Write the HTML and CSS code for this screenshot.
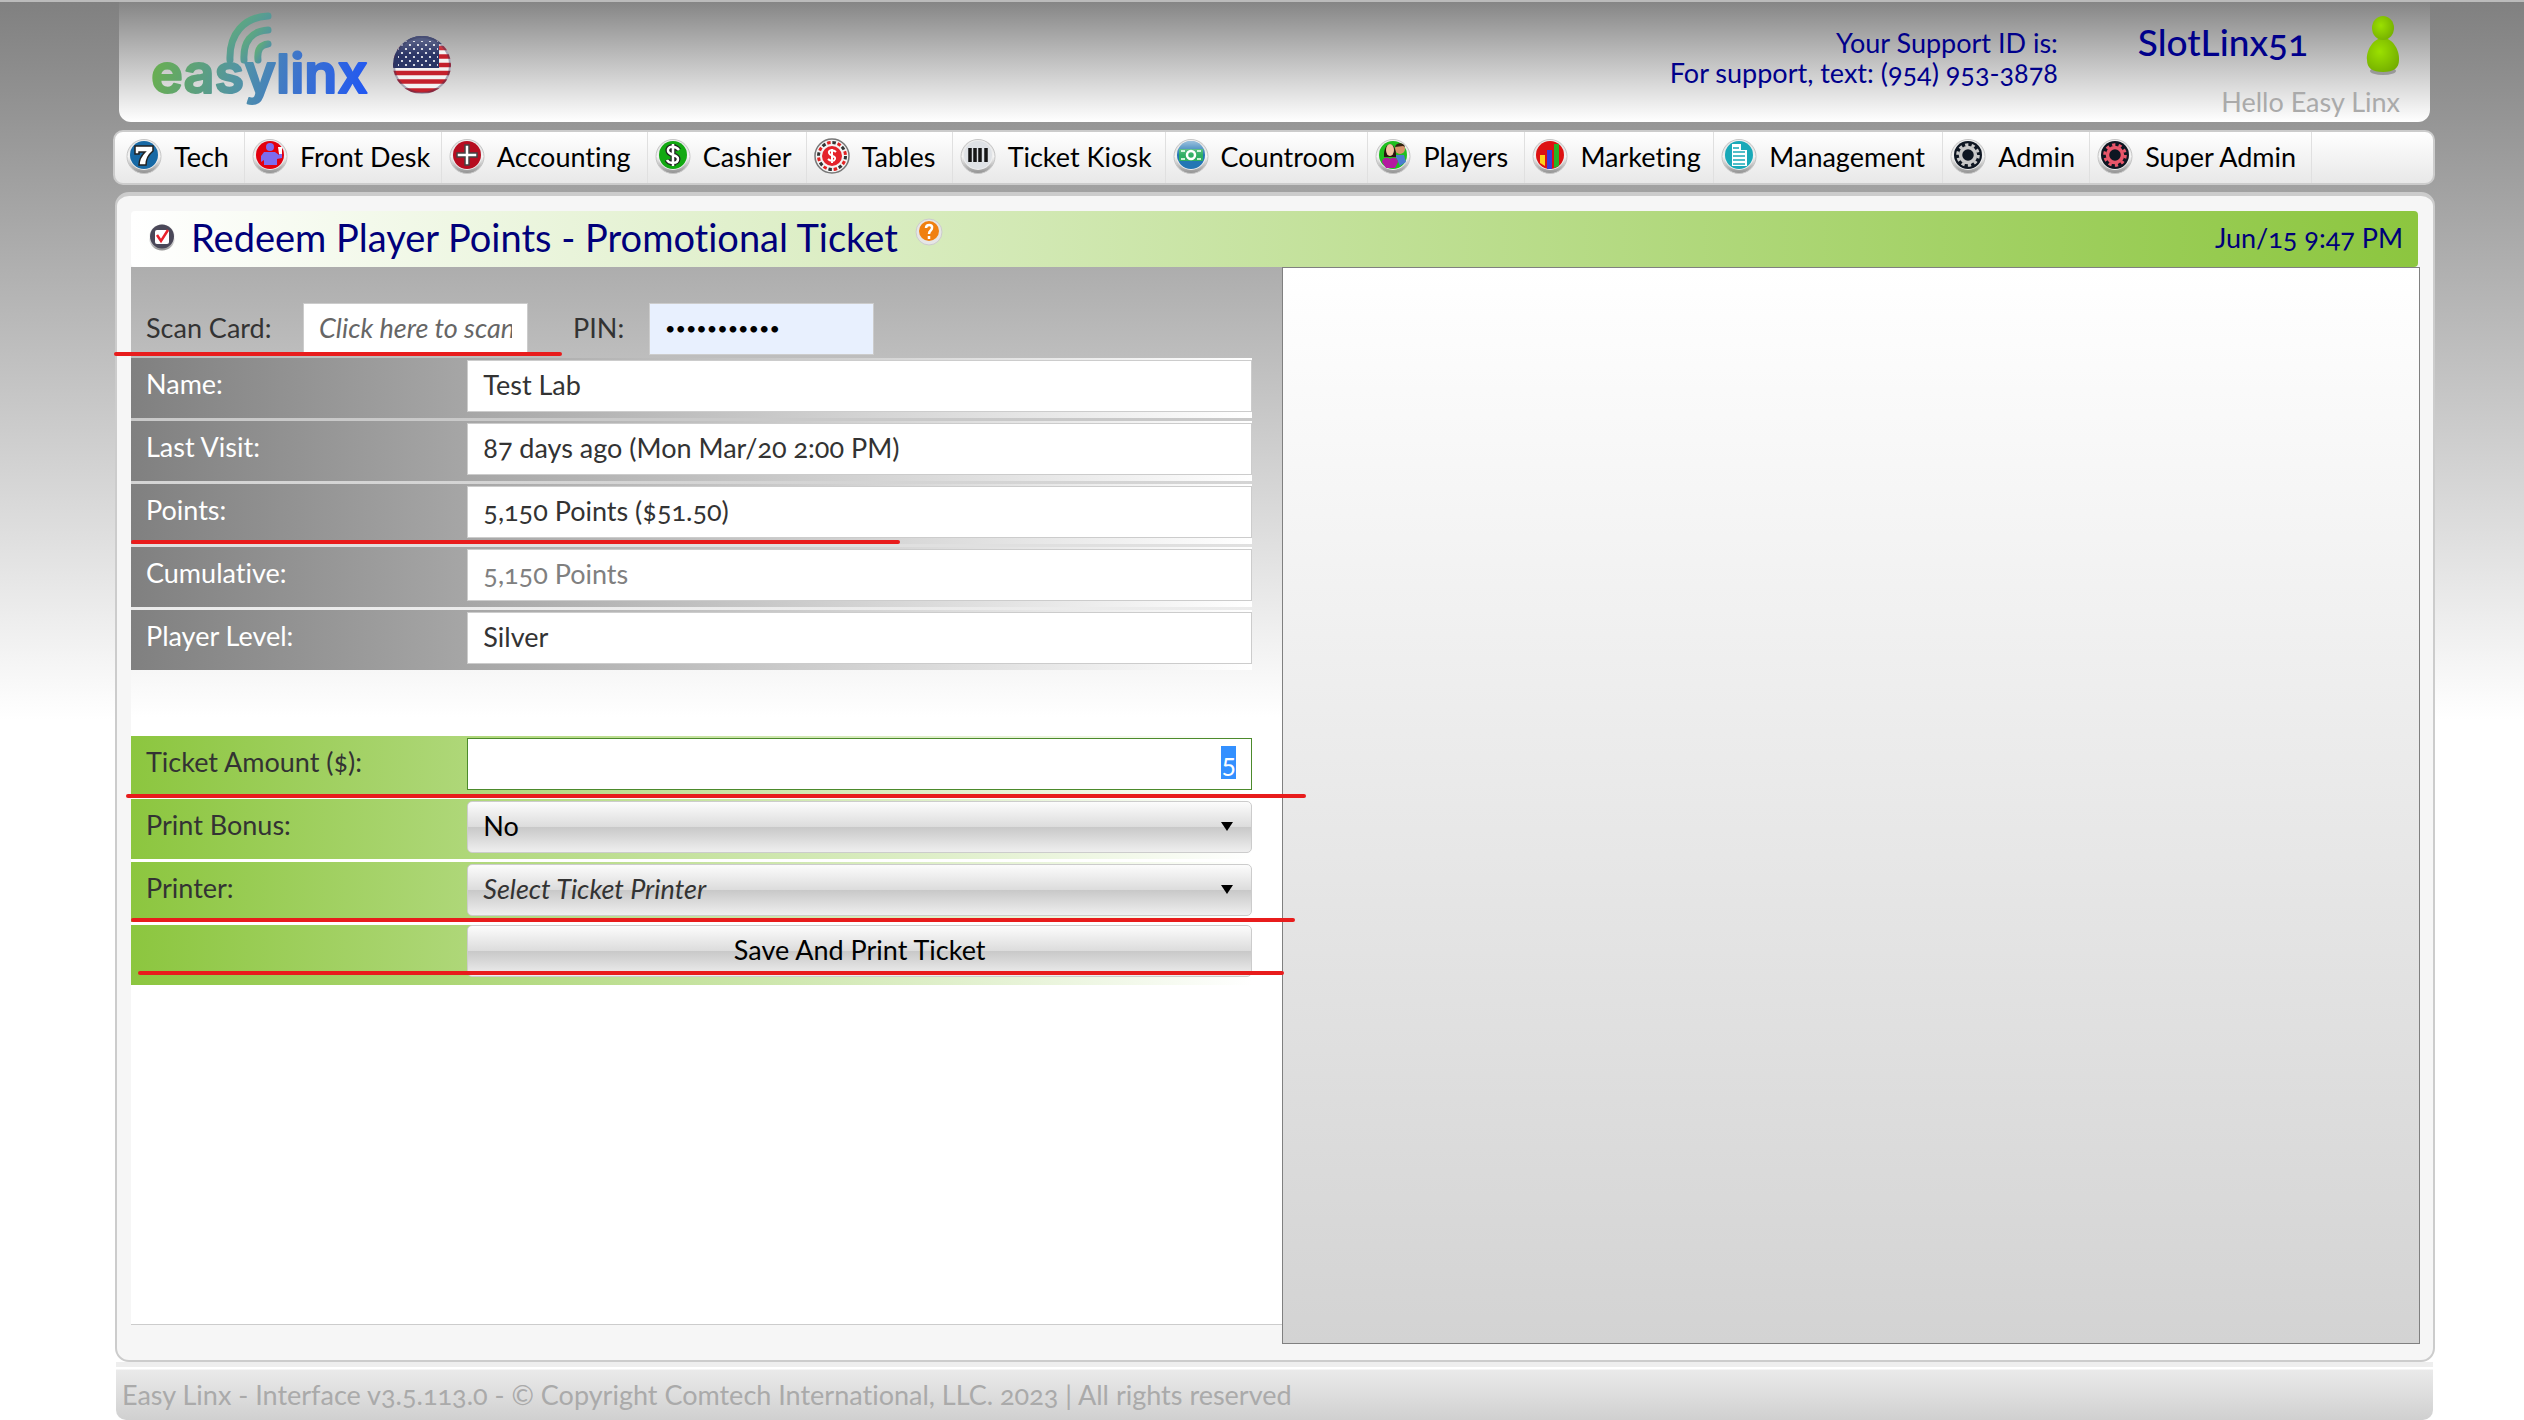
FILE: index.html
```html
<!DOCTYPE html>
<html lang="en">
<head>
    <meta charset="UTF-8">
    <meta name="viewport" content="width=device-width, initial-scale=1.0">
    <title>Redeem Player Points - Promotional Ticket</title>
    <link rel="stylesheet" href="styles.css">
</head>
<body>
    <svg class="defs" width="0" height="0" aria-hidden="true">
        <defs>
            <linearGradient id="rim" x1="0" y1="0" x2="0" y2="1">
                <stop offset="0" stop-color="#d4d4d4"/><stop offset="0.5" stop-color="#f6f6f6"/><stop offset="1" stop-color="#8f8f8f"/>
            </linearGradient>
            <linearGradient id="shine" x1="0" y1="0" x2="0" y2="1">
                <stop offset="0" stop-color="#fff" stop-opacity="0.55"/><stop offset="0.5" stop-color="#fff" stop-opacity="0"/>
            </linearGradient>
            <linearGradient id="brand" gradientUnits="userSpaceOnUse" x1="0" y1="40" x2="222" y2="85">
                <stop offset="0" stop-color="#6ab04c"/><stop offset="0.4" stop-color="#5294a4"/><stop offset="0.65" stop-color="#3d74cc"/><stop offset="1" stop-color="#1f55f5"/>
            </linearGradient>
            <linearGradient id="waves" x1="0" y1="0" x2="1" y2="1">
                <stop offset="0" stop-color="#62b074"/><stop offset="1" stop-color="#4a84b8"/>
            </linearGradient>
            <radialGradient id="lime" cx="0.4" cy="0.4" r="0.7">
                <stop offset="0" stop-color="#9be000"/><stop offset="1" stop-color="#72ac00"/>
            </radialGradient>
            <symbol id="ring" viewBox="0 0 36 36">
                <circle cx="18" cy="18.500" r="17" fill="url(#rim)" stroke="#c6c6c6" stroke-width="1"/>
                <circle cx="18" cy="17" r="15" fill="#eee"/>
            </symbol>
            <symbol id="gear" viewBox="0 0 36 36">
                <circle cx="18" cy="17" r="14" fill="#0e1622"/>
                <circle cx="18" cy="17" r="7.500" fill="none" stroke="currentColor" stroke-width="3.500"/>
                <circle cx="18" cy="17" r="10.300" fill="none" stroke="currentColor" stroke-width="3" stroke-dasharray="3.240 3.240"/>
            </symbol>
            <clipPath id="round"><circle cx="30" cy="30" r="29"/></clipPath>
            <pattern id="stars" width="8" height="8" patternUnits="userSpaceOnUse">
                <circle cx="2" cy="2" r="1.100" fill="#fff"/><circle cx="6" cy="6" r="1.100" fill="#fff"/>
            </pattern>
        </defs>
    </svg>

    <div class="page">
        <header class="header">
            <svg class="logo" width="224" height="102" viewBox="0 0 224 102" role="img" aria-label="easylinx">
                <g fill="none" stroke="url(#waves)" stroke-width="7" stroke-linecap="round">
                    <path d="M79 48C78 22 93 5 117 4"/>
                    <path d="M93 48C92 30 100 19 117 18"/>
                    <path d="M107 48C106 38 109 33 117 32"/>
                </g>
                <text class="logo-text" x="0" y="81" fill="url(#brand)" stroke="url(#brand)">easylinx</text>
            </svg>
            <svg class="flag" width="60" height="60" viewBox="0 0 60 60" role="img" aria-label="English">
                <g clip-path="url(#round)">
                    <rect width="60" height="60" fill="#f4f2f2"/>
                    <path d="M0 13H60M0 21.500H60M0 30H60M0 38H60M0 46.500H60M0 55.500H60" stroke="#c4202c" stroke-width="4.500"/>
                    <rect width="47" height="33" fill="#2b3566"/>
                    <rect x="6" y="6" width="40" height="25" fill="url(#stars)"/>
                    <path d="M0 0H60V9H47V5H0Z" fill="#1e2a5c"/>
                    <ellipse cx="30" cy="20" rx="27" ry="19" fill="url(#shine)" opacity="0.5"/>
                </g>
                <circle cx="30" cy="30" r="28" fill="none" stroke="#31345a" stroke-opacity="0.4" stroke-width="2"/>
            </svg>
            <div class="support">
                <div>Your Support ID is:</div>
                <div>For support, text: (954) 953-3878</div>
            </div>
            <div class="account">
                <div class="account-top">
                    <span class="account-id">SlotLinx51</span>
                    <svg class="person" width="34" height="60" viewBox="0 0 34 60" aria-hidden="true">
                        <ellipse cx="17" cy="55" rx="13" ry="4" fill="#666" opacity="0.5"/>
                        <path d="M17 22C27 22 34 35 33 44C33 52 28 56 17 56S1 52 1 44C0 35 7 22 17 22Z" fill="url(#lime)"/>
                        <ellipse cx="17" cy="12" rx="11" ry="12" fill="url(#lime)"/>
                    </svg>
                </div>
                <div class="hello">Hello Easy Linx</div>
            </div>
        </header>

        <nav class="menu">
            <a href="#"><svg class="icon" viewBox="0 0 36 36"><use href="#ring"/><circle cx="18" cy="17" r="14" fill="#1769a5"/><path d="M9 8H27V13C22 17 20 21 20 27H13C13 21 16 17 19 14H13V16H9Z" fill="#fff" stroke="#222" stroke-width="1.500"/></svg>Tech</a>
            <a href="#"><svg class="icon" viewBox="0 0 36 36"><use href="#ring"/><circle cx="18" cy="17" r="14" fill="#e3000f"/><circle cx="18" cy="9" r="4" fill="#7d6cf0"/><path d="M12 14H23L27 17V9H30V20L25 21V27H12V22L9 24V18Z" fill="#7d6cf0"/><path d="M26 9H30V16H27Z" fill="#fff"/></svg>Front Desk</a>
            <a href="#"><svg class="icon" viewBox="0 0 36 36"><use href="#ring"/><circle cx="18" cy="17" r="14" fill="#b60d20"/><path d="M16 7H20V15H28V19H20V27H16V19H8V15H16Z" fill="#fff" stroke="#444" stroke-width="1.500"/></svg>Accounting</a>
            <a href="#"><svg class="icon" viewBox="0 0 36 36"><use href="#ring"/><circle cx="18" cy="17" r="14" fill="#12a912"/><path d="M24 12C20 7 12 8 13 13C14 18 23 16 23 21C23 26 14 26 12 22M18 6V28" fill="none" stroke="#222" stroke-width="5"/><path d="M24 12C20 7 12 8 13 13C14 18 23 16 23 21C23 26 14 26 12 22M18 6V28" fill="none" stroke="#fff" stroke-width="2.500"/></svg>Cashier</a>
            <a href="#"><svg class="icon" viewBox="0 0 36 36"><circle cx="18" cy="18" r="17" fill="#f4f4f4" stroke="#777" stroke-width="1.500"/><circle cx="18" cy="18" r="13.500" fill="none" stroke="#333" stroke-width="3" stroke-dasharray="3.500 7.100"/><circle cx="18" cy="18" r="13.500" fill="none" stroke="#e02222" stroke-width="3" stroke-dasharray="3.500 7.100" stroke-dashoffset="5.300"/><circle cx="18" cy="18" r="10" fill="#e4232b"/><path d="M22 14C19 11 14 12 15 15C16 19 22 17 21 21C20 24 16 23 14 21M18 11V25" fill="none" stroke="#fff" stroke-width="2"/></svg>Tables</a>
            <a href="#"><svg class="icon" viewBox="0 0 36 36"><use href="#ring"/><circle cx="18" cy="17" r="14" fill="#dfe2e6"/><path d="M10 10V24M15 10V24M20 10V24M26 10V24" stroke="#161616" stroke-width="3.500"/></svg>Ticket Kiosk</a>
            <a href="#"><svg class="icon" viewBox="0 0 36 36"><use href="#ring"/><circle cx="18" cy="17" r="14" fill="#2376b4"/><rect x="6" y="11" width="24" height="12" fill="#2fae63"/><circle cx="18" cy="17" r="4" fill="none" stroke="#fff" stroke-width="2.500"/><path d="M8 13H12M28 13H24M8 21H12M28 21H24" stroke="#c9f2d4" stroke-width="2"/><circle cx="18" cy="17" r="14" fill="url(#shine)"/></svg>Countroom</a>
            <a href="#"><svg class="icon" viewBox="0 0 36 36"><use href="#ring"/><circle cx="18" cy="17" r="14" fill="#1fc01f"/><path d="M20 17H29L31 24L25 28Z" fill="#4b7bd0"/><circle cx="25" cy="11" r="5" fill="#d9936a"/><path d="M20 9C21 4 29 4 30 9L28 8Z" fill="#332211"/><path d="M9 19C8 2 22 2 21 19Z" fill="#2a1410"/><ellipse cx="15" cy="12" rx="4" ry="6" fill="#f3c3a2"/><path d="M7 24C8 19 12 19 15 21C18 19 22 19 23 24L20 30H11Z" fill="#b41aa0"/></svg>Players</a>
            <a href="#"><svg class="icon" viewBox="0 0 36 36"><use href="#ring"/><circle cx="18" cy="17" r="14" fill="#dd1111"/><path d="M8 17H13V28L8 25Z" fill="#ffd21c"/><path d="M15 12H20V31H15Z" fill="#3a3ad8"/><path d="M22 6H27V28L22 30Z" fill="#25b425"/></svg>Marketing</a>
            <a href="#"><svg class="icon" viewBox="0 0 36 36"><use href="#ring"/><circle cx="18" cy="17" r="14" fill="#19a9b8"/><path d="M11 6H20V12H26V28H11Z" fill="#fff"/><path d="M12 10H18M12 14H24M12 18H24M12 22H24M12 26H24" stroke="#19a9b8" stroke-width="1.500"/></svg>Management</a>
            <a href="#"><svg class="icon gear-grey" viewBox="0 0 36 36"><use href="#ring"/><use href="#gear"/></svg>Admin</a>
            <a href="#"><svg class="icon gear-red" viewBox="0 0 36 36"><use href="#ring"/><use href="#gear"/></svg>Super Admin</a>
        </nav>

        <main class="panel">
            <div class="title-bar">
                <svg class="title-icon" viewBox="0 0 28 28" aria-hidden="true"><circle cx="14" cy="14.500" r="13" fill="url(#rim)"/><circle cx="14" cy="13.500" r="12" fill="#4a4858"/><rect x="7" y="7" width="14" height="14" rx="2" fill="#fff"/><path d="M9 12L13 18L20 7" fill="none" stroke="#e8202a" stroke-width="2.500"/></svg>
                <h1>Redeem Player Points - Promotional Ticket</h1>
                <svg class="help" viewBox="0 0 28 28" role="img" aria-label="Help"><circle cx="14" cy="14" r="13" fill="#e6e6e6" stroke="#ccc"/><circle cx="14" cy="13" r="10" fill="#f08010"/><path d="M11 10C11 6 18 6 17 10C17 13 14 12 14 16M14 18V21" fill="none" stroke="#fff" stroke-width="2.500"/></svg>
                <time class="clock">Jun/15 9:47 PM</time>
            </div>

            <div class="content">
                <form class="redeem" onsubmit="return false">
                    <div class="scan-row">
                        <label for="card">Scan Card:</label>
                        <input type="text" id="card" placeholder="Click here to scan card">
                        <label for="pin" class="pin-label">PIN:</label>
                        <input type="password" id="pin" value="12345678901">
                        <span class="mark mark-scan"></span>
                    </div>

                    <div class="rows">
                        <div class="row">
                            <label for="name">Name:</label>
                            <input type="text" id="name" value="Test Lab" readonly>
                        </div>
                        <div class="row">
                            <label for="visit">Last Visit:</label>
                            <input type="text" id="visit" value="87 days ago (Mon Mar/20 2:00 PM)" readonly>
                        </div>
                        <div class="row">
                            <label for="points">Points:</label>
                            <input type="text" id="points" value="5,150 Points ($51.50)" readonly>
                            <span class="mark mark-points"></span>
                        </div>
                        <div class="row">
                            <label for="cumulative">Cumulative:</label>
                            <input type="text" id="cumulative" class="muted" value="5,150 Points" readonly>
                        </div>
                        <div class="row">
                            <label for="level">Player Level:</label>
                            <input type="text" id="level" value="Silver" readonly>
                        </div>
                    </div>

                    <div class="rows ticket">
                        <div class="row">
                            <label for="amount">Ticket Amount ($):</label>
                            <input type="text" id="amount" class="amount" value="5">
                            <span class="mark mark-amount"></span>
                        </div>
                        <div class="row">
                            <label for="bonus">Print Bonus:</label>
                            <div class="select">
                                <select id="bonus"><option>No</option><option>Yes</option></select>
                            </div>
                        </div>
                        <div class="row">
                            <label for="printer">Printer:</label>
                            <div class="select">
                                <select id="printer" class="empty"><option>Select Ticket Printer</option></select>
                            </div>
                            <span class="mark mark-printer"></span>
                        </div>
                        <div class="row save">
                            <span></span>
                            <button type="submit">Save And Print Ticket</button>
                            <span class="mark mark-save"></span>
                        </div>
                    </div>
                </form>
                <div class="preview"></div>
            </div>
        </main>

        <footer class="footer">Easy Linx - Interface v3.5.113.0 - © Copyright Comtech International, LLC. 2023 | All rights reserved</footer>
    </div>

    <script>
        // amount is ready to be typed over
        document.getElementById("amount").focus();
        document.getElementById("amount").select();
    </script>
</body>
</html>
```
FILE: styles.css
```css
* {
    box-sizing: border-box;
}
body {
    margin: 0;
    font-family: Lato, "Open Sans", sans-serif;
    font-size: 27px;
    font-variant-numeric: oldstyle-nums;
    font-variant-ligatures: none;
    color: #333;
    background: #fff linear-gradient(#808080, #b0b0b0 270px, #fff 720px) no-repeat;
    border-top: 2px solid #bbb;
}
.defs {
    position: absolute;
}
.page {
    display: flex;
    flex-direction: column;
    min-height: calc(100vh - 2px);
    padding: 0 89px 0 113px;
}

.header {
    display: flex;
    height: 120px;
    margin: 0 5px 0 6px;
    padding: 0 30px 0 32px;
    border-radius: 0 0 12px 12px;
    background: linear-gradient(#858585, #fff);
    color: #00008b;
}
.logo {
    margin-top: 10px;
    overflow: visible;
}
.logo-text {
    font-family: Inter, sans-serif;
    font-size: 54px;
    font-weight: 600;
    stroke-width: 2px;
    stroke-linejoin: round;
}
.flag {
    margin: 33px 0 0 17px;
}
.support {
    margin-left: auto;
    padding-top: 26px;
    line-height: 30px;
    text-align: right;
}
.account {
    margin-left: 80px;
    text-align: right;
}
.account-top {
    display: flex;
    gap: 58px;
    height: 84px;
    padding-top: 14px;
}
.account-id {
    font-size: 37px;
    line-height: 52px;
    font-weight: 500;
}
.hello {
    line-height: 32px;
    color: #aaa;
}

.menu {
    display: grid;
    grid-template-columns: 126fr 197fr 206fr 159fr 146fr 213fr 203fr 157fr 189fr 229fr 147fr 222fr 117fr;
    height: 55px;
    margin-top: 8px;
    padding: 0 4px;
    border: 2px solid #ccc;
    border-radius: 10px;
    background: linear-gradient(#fff, #e8e8e8);
}
.menu a {
    display: flex;
    align-items: center;
    gap: 12px;
    padding: 0 0 3px 7px;
    border-right: 1px solid #e0e0e0;
    color: #000;
    text-decoration: none;
    white-space: nowrap;
}
.icon {
    flex: none;
    width: 36px;
    height: 36px;
}
.gear-grey {
    color: #c8c8c8;
}
.gear-red {
    color: #e8566a;
}

.panel {
    flex: 1;
    margin: 7px 0 0 2px;
    padding: 15px 13px 16px 14px;
    border: 2px solid #ccc;
    border-top-width: 4px;
    border-radius: 14px;
    background: #f6f6f6;
}
.title-bar {
    display: flex;
    align-items: center;
    height: 56px;
    margin-right: 2px;
    padding: 0 15px 4px 17px;
    border-radius: 4px;
    background: linear-gradient(to right, #fff, #8cc63f);
    color: #00007a;
}
.title-icon, .help {
    width: 28px;
    height: 28px;
}
.title-bar h1 {
    margin: 0 17px 0 15px;
    font-size: 38px;
    font-weight: 400;
}
.help {
    margin-bottom: 10px;
}
.clock {
    margin-left: auto;
}

.content {
    display: grid;
    grid-template-columns: 1151fr 1138fr;
    align-items: start;
}
.redeem {
    min-height: 1058px;
    border-bottom: 1px solid #ccc;
    background: #fff linear-gradient(#adadad, #fff 450px) no-repeat;
}
.preview {
    height: 1077px;
    border: 1px solid #808080;
    background: linear-gradient(#fff, #d3d3d3);
}
.scan-row {
    display: flex;
    align-items: center;
    position: relative;
    height: 91px;
    padding: 33px 0 0 15px;
}
.scan-row label {
    width: 157px;
    padding-bottom: 4px;
}
.scan-row .pin-label {
    width: 76px;
    margin-left: 45px;
}
.scan-row input {
    width: 225px;
}
.rows {
    display: grid;
    gap: 3px;
    margin-right: 30px;
}
.ticket {
    margin-top: 66px;
}
.row {
    display: grid;
    grid-template-columns: 3fr 7fr;
    align-items: start;
    position: relative;
    height: 60px;
    padding-top: 2px;
    background: linear-gradient(to right, #808080, #fff);
    color: #fff;
}
.ticket .row {
    background: linear-gradient(to right, #8cc63f, #fff);
    color: #333;
}
.ticket .save {
    padding-top: 0;
}
.row label {
    padding-left: 15px;
    line-height: 48px;
}

input, select, button {
    width: 100%;
    height: 52px;
    margin: 0;
    padding: 0 15px 3px;
    border: 1px solid #ccc;
    background: #fff;
    color: #333;
    font: inherit;
    font-variant-numeric: inherit;
}
input:focus {
    outline: none;
    border-color: #4c8a2c;
}
input::placeholder {
    color: #666;
    font-style: italic;
}
input::selection {
    background: #3390ff;
    color: #fff;
}
#pin {
    background: #e8f0fe;
    color: #000;
    font-size: 18px;
}
.muted {
    color: #808080;
}
.amount {
    text-align: right;
}
select, button {
    appearance: none;
    border-radius: 5px;
    background: linear-gradient(#fcfcfc, #dcdcdc 50%, #c8c8c8 50%, #efefef);
    color: #000;
}
.empty {
    color: #333;
    font-style: italic;
}
.select {
    position: relative;
}
.select::after {
    content: "";
    position: absolute;
    top: 21px;
    right: 19px;
    border: 6px solid transparent;
    border-top: 9px solid #000;
    border-bottom: 0;
}

/* red underlines over the fields that matter */
.mark {
    position: absolute;
    z-index: 1;
    height: 4px;
    border-radius: 2px;
    background: #e81c1c;
}
.mark-scan {
    left: -17px;
    bottom: 2px;
    width: 448px;
}
.mark-points {
    left: 0;
    bottom: 0;
    width: 769px;
}
.mark-amount {
    left: -5px;
    right: -54px;
    bottom: -2px;
}
.mark-printer {
    left: 0;
    right: -43px;
    bottom: 0;
}
.mark-save {
    left: 7px;
    right: -32px;
    bottom: 10px;
}

.footer {
    height: 58px;
    margin: 0 2px 0 3px;
    padding-left: 6px;
    border-radius: 0 0 10px 10px;
    background: linear-gradient(#eee 5px, #fff 5px, #fff 7px, #eaeaea 8px, #d0d0d0);
    color: #aaa;
    line-height: 66px;
}
```
